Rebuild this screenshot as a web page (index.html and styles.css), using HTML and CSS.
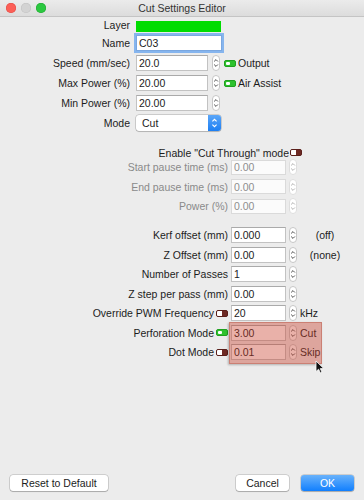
FILE: index.html
```html
<!DOCTYPE html>
<html>
	<head>
		<meta charset="utf-8">
		<link rel="stylesheet" href="styles.css">
	</head>

	<body>
		<svg class="defs" aria-hidden="true">
			<symbol id="spin" viewBox="0 0 8 16">
				<rect x="0.5" y="0.5" width="7" height="15" rx="3.5" />
				<path d="M2.4 6.2 L4 4.6 L5.6 6.2 M2.4 9.8 L4 11.4 L5.6 9.8" fill="none" stroke="currentColor" stroke-width="0.9" stroke-linecap="round" />
			</symbol>
			<symbol id="step" viewBox="0 0 13 16">
				<path d="M4.4 6.4 L6.5 4.3 L8.6 6.4 M4.4 9.6 L6.5 11.7 L8.6 9.6" />
			</symbol>
		</svg>

		<div class="window">
			<header class="titlebar">
				<div class="lights">
					<span class="light close"></span>
					<span class="light mini"></span>
					<span class="light zoom"></span>
				</div>
				<h1>Cut Settings Editor</h1>
			</header>

			<form class="editor">
				<!-- basic settings -->
				<section class="basics">
					<span class="lbl">Layer</span>
					<div class="field"><span class="swatch"></span></div>

					<span class="lbl">Name</span>
					<div class="field"><input class="text name" value="C03"></div>

					<span class="lbl">Speed (mm/sec)</span>
					<div class="field">
						<input class="text num" value="20.0">
						<svg class="spin"><use href="#spin"/></svg>
						<span class="toggle on"></span><span class="side">Output</span>
					</div>

					<span class="lbl">Max Power (%)</span>
					<div class="field">
						<input class="text num" value="20.00">
						<svg class="spin"><use href="#spin"/></svg>
						<span class="toggle on"></span><span class="side">Air Assist</span>
					</div>

					<span class="lbl">Min Power (%)</span>
					<div class="field">
						<input class="text num" value="20.00">
						<svg class="spin"><use href="#spin"/></svg>
					</div>

					<span class="lbl">Mode</span>
					<div class="field">
						<div class="select">
							<span>Cut</span>
							<svg class="stepper"><use href="#step"/></svg>
						</div>
					</div>
				</section>

				<!-- cut through -->
				<div class="cut-through">
					<span>Enable "Cut Through" mode</span><span class="toggle off"></span>
				</div>
				<section class="grid disabled">
					<span class="lbl">Start pause time (ms)</span>
					<input class="text" value="0.00" disabled>
					<svg class="spin"><use href="#spin"/></svg>
					<span></span>

					<span class="lbl">End pause time (ms)</span>
					<input class="text" value="0.00" disabled>
					<svg class="spin"><use href="#spin"/></svg>
					<span></span>

					<span class="lbl">Power (%)</span>
					<input class="text" value="0.00" disabled>
					<svg class="spin"><use href="#spin"/></svg>
					<span></span>
				</section>

				<!-- offsets and passes -->
				<section class="grid">
					<span class="lbl">Kerf offset (mm)</span>
					<input class="text" value="0.000">
					<svg class="spin"><use href="#spin"/></svg>
					<span class="note">(off)</span>

					<span class="lbl">Z Offset (mm)</span>
					<input class="text" value="0.00">
					<svg class="spin"><use href="#spin"/></svg>
					<span class="note">(none)</span>

					<span class="lbl">Number of Passes</span>
					<input class="text" value="1">
					<svg class="spin"><use href="#spin"/></svg>
					<span></span>

					<span class="lbl">Z step per pass (mm)</span>
					<input class="text" value="0.00">
					<svg class="spin"><use href="#spin"/></svg>
					<span></span>

					<span class="lbl">Override PWM Frequency<span class="toggle off"></span></span>
					<input class="text" value="20">
					<svg class="spin"><use href="#spin"/></svg>
					<span class="unit">kHz</span>

					<span class="lbl">Perforation Mode<span class="toggle on"></span></span>
					<input class="text" value="3.00">
					<svg class="spin"><use href="#spin"/></svg>
					<span class="unit">Cut</span>

					<span class="lbl">Dot Mode<span class="toggle off"></span></span>
					<input class="text" value="0.01">
					<svg class="spin"><use href="#spin"/></svg>
					<span class="unit">Skip</span>
				</section>
			</form>

			<footer class="buttons">
				<button class="btn reset" type="button">Reset to Default</button>
				<button class="btn cancel" type="button">Cancel</button>
				<button class="btn ok" type="button">OK</button>
			</footer>

			<!-- highlight drawn over the perforation fields -->
			<div class="highlight"></div>
			<svg class="cursor" width="10" height="14" viewBox="0 0 10 14">
				<path d="M1 1 L1 11.5 L3.6 9.2 L5.4 13 L7 12.3 L5.3 8.6 L8.8 8.6 Z" />
			</svg>
		</div>
	</body>
</html>
```

FILE: styles.css
```css
* {
	box-sizing: border-box;
}

html, body {
	margin: 0;
}

body {
	width: 364px;
	height: 500px;
	overflow: hidden;
	background: #ececec;
	color: #1c1c1c;
	font-family: "Liberation Sans", Arial, sans-serif;
	font-size: 10.5px;
}

.defs {
	display: none;
}

.window {
	position: relative;
	display: flex;
	flex-direction: column;
	height: 500px;
}

/* title bar */
.titlebar {
	display: grid;
	grid-template-columns: 1fr auto 1fr;
	align-items: center;
	height: 17px;
	background: linear-gradient(#ebebeb, #dcdcdc);
	border-bottom: 1px solid #c4c4c4;

	& h1 {
		margin: 0;
		font-size: 10.5px;
		font-weight: normal;
		color: #333;
	}
}

.lights {
	display: flex;
	gap: 5px;
	padding-left: 6px;
}

.light {
	width: 10px;
	height: 10px;
	border-radius: 50%;

	&.close { background: #fc5f57; box-shadow: inset 0 0 0 0.5px #df4a43; }
	&.mini { background: #d3d3d3; box-shadow: inset 0 0 0 0.5px #c0c0c0; }
	&.zoom { background: #2bc840; box-shadow: inset 0 0 0 0.5px #1fa42f; }
}

/* shared controls */
.text {
	height: 16px;
	margin: 0;
	padding: 0 2px;
	border: 1px solid #c2c2c2;
	border-top-color: #aaa;
	border-radius: 0;
	background: #fff;
	color: #1c1c1c;
	font: inherit;
	outline: none;

	&:disabled {
		border-color: #dadada;
		background: #fbfbfb;
		color: #8e8e8e;
	}
}

.spin {
	width: 8px;
	height: 16px;
	fill: #fff;
	stroke: #c6c6c6;
	stroke-width: 1;
	color: #3c3c3c;
}

.toggle {
	position: relative;
	display: inline-block;
	flex: none;
	width: 12px;
	height: 7px;
	border-radius: 2px;

	&::after {
		content: "";
		position: absolute;
		top: 1px;
		width: 4px;
		height: 3px;
		border-radius: 1px;
		background: #fff;
	}

	&.on {
		background: #2ec22e;
		border: 1px solid #20a020;

		&::after { left: 1px; }
	}

	&.off {
		background: #6e2a24;
		border: 1px solid #5a1f1a;

		&::after { left: 0; width: 5px; height: 5px; top: 0; border-radius: 1px 0 0 1px; }
	}
}

/* basics block */
.basics {
	display: grid;
	grid-template-columns: 130px 1fr;
	grid-template-rows: 12px repeat(5, 16px);
	column-gap: 6px;
	row-gap: 4px;
	align-items: center;
	margin-top: 2px;
}

.lbl {
	display: flex;
	align-items: center;
	justify-content: flex-end;
	gap: 2px;
	white-space: nowrap;
}

.field {
	display: flex;
	align-items: center;
	gap: 4px;
	height: 16px;
}

.swatch {
	width: 85px;
	height: 11px;
	margin-top: 2px;
	background: #00dc00;
}

.name {
	width: 86px;
	box-shadow: 0 0 0 2px #86b5ee;
	border-color: #7aa7e0;
}

.num {
	width: 72px;
}

.side {
	margin-left: -2px;
}

.select {
	display: flex;
	align-items: center;
	justify-content: space-between;
	width: 85px;
	height: 16px;
	padding-left: 6px;
	border-radius: 3px;
	background: #fff;
	box-shadow: 0 0 0 0.5px rgba(0, 0, 0, 0.28), 0 1px 1px rgba(0, 0, 0, 0.12);
}

.stepper {
	width: 13px;
	height: 16px;
	border-radius: 0 3px 3px 0;
	background: linear-gradient(#5ba6f8, #1d7ff3);
	fill: none;
	stroke: #fff;
	stroke-width: 1.1;
}

/* cut through block */
.cut-through {
	display: flex;
	align-items: center;
	justify-content: flex-end;
	gap: 1px;
	height: 13px;
	margin-top: 15px;
	padding-right: 62px;
}

.grid {
	display: grid;
	grid-template-columns: 228px 55px 8px 1fr;
	grid-auto-rows: 16px;
	column-gap: 3px;
	row-gap: 3.5px;
	align-items: center;
	margin-top: 13px;

	& .spin { justify-self: end; }
}

.grid.disabled {
	row-gap: 3.5px;
	margin-top: 0;

	& .lbl { color: #8a8a8a; }
	& .text { height: 15px; }
	& .spin { stroke: #dedede; color: #a8a8a8; }
}

.note {
	width: 50px;
	text-align: center;
}

/* buttons */
.buttons {
	display: flex;
	align-items: center;
	margin-top: auto;
	padding: 0 10px 9px;
}

.btn {
	height: 16px;
	padding: 0;
	border: none;
	border-radius: 3px;
	background: #fff;
	color: #1c1c1c;
	font: inherit;
	box-shadow: 0 0 0 0.5px rgba(0, 0, 0, 0.25), 0 1px 1px rgba(0, 0, 0, 0.18);
}

.reset {
	width: 98px;
}

.cancel {
	width: 53px;
	margin-left: auto;
}

.ok {
	width: 53px;
	margin-left: 12px;
	background: linear-gradient(#69b2fb, #117ffe);
	color: #fff;
}

/* overlay */
.highlight {
	position: absolute;
	left: 229px;
	top: 322px;
	width: 93px;
	height: 42px;
	background: rgba(200, 60, 40, 0.4);
	border: 1px solid rgba(170, 60, 40, 0.35);
	box-shadow: -1px 1px 2px rgba(0, 0, 0, 0.25);
}

.cursor {
	position: absolute;
	left: 315px;
	top: 360px;
	fill: #111;
	stroke: #fff;
	stroke-width: 0.8;
}
```
